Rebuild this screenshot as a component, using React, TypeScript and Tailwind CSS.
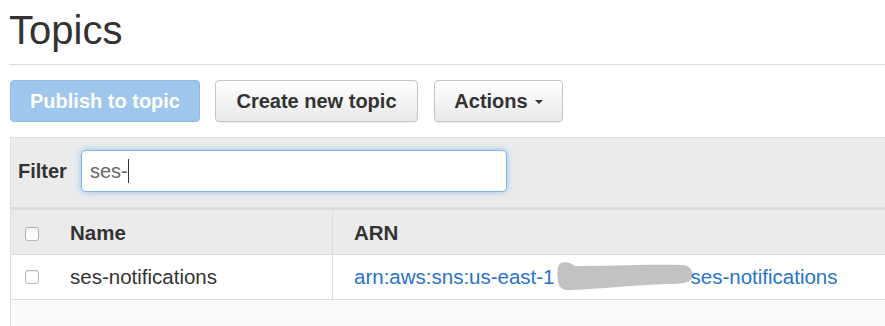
import React from "react";

const Checkbox = () => (
  <span className="inline-block w-[14px] h-[14px] rounded-[3px] border border-[#b5b5b5] bg-white shadow-[inset_0_1px_1px_rgba(0,0,0,0.08)]" />
);

// grey smudge that hides the account id in the ARN
const Redacted = () => (
  <svg width="138" height="32" viewBox="0 0 138 32" className="inline-block align-middle -mt-[1px] -mr-[2px]">
    <path
      d="M6 2 C12 0 17 3 20 5 C50 5 90 3 128 4 C136 5 138 10 137 16 C136 22 128 23 112 23 C80 24 44 28 16 29 C8 30 4 27 3 20 C2 12 2 4 6 2 Z"
      fill="#c2c2c2"
    />
  </svg>
);

export default function App() {
  return (
    <div className="w-[885px] h-[326px] overflow-hidden bg-white font-['Liberation_Sans',Arial,sans-serif] text-[#333]">
      <div className="pl-[10px]">
        <h1 className="mt-[11px] pb-[14px] text-[40px] leading-[39px] -ml-[1px] border-b border-[#dcdcdc]">
          Topics
        </h1>

        <div className="mt-[15px] flex items-center">
          <button className="w-[190px] h-[42px] rounded-[4px] bg-[#9fc6ec] border border-[#8fbbe4] text-white font-bold text-[20px]">
            Publish to topic
          </button>
          <button className="ml-[15px] w-[203px] h-[42px] rounded-[4px] bg-gradient-to-b from-white to-[#e9e9e9] border border-[#c6c6c6] shadow-[0_1px_1px_rgba(0,0,0,0.08)] text-[#333] font-bold text-[20px]">
            Create new topic
          </button>
          <button className="ml-[16px] w-[129px] h-[42px] rounded-[4px] bg-gradient-to-b from-white to-[#e9e9e9] border border-[#c6c6c6] shadow-[0_1px_1px_rgba(0,0,0,0.08)] text-[#333] font-bold text-[20px] flex items-center justify-center">
            Actions
            <span className="ml-[7px] mt-[2px] w-0 h-0 border-t-[4px] border-t-[#333] border-x-[4px] border-x-transparent" />
          </button>
        </div>

        <div className="mt-[15px] bg-[#ebebeb] border-t border-l border-[#dddddd]">
          <div className="flex items-center pl-[7px] pt-[12px] pb-[15px] border-b-[3px] border-[#dcdcdc]">
            <span className="font-bold text-[20px]">Filter</span>
            <div className="ml-[14px] w-[426px] h-[42px] rounded-[5px] bg-white border border-[#7fb8ea] shadow-[0_0_6px_rgba(102,175,233,0.7)] flex items-center pl-[8px] text-[20px] text-[#666]">
              ses-
              <span className="inline-block w-[1px] h-[24px] bg-[#333]" />
            </div>
          </div>

          <div className="flex h-[45px] border-b border-[#dcdcdc] items-center">
            <div className="w-[322px] h-full flex items-center border-r border-[#dcdcdc] pt-[3px]">
              <span className="ml-[14px] flex">
                <Checkbox />
              </span>
              <span className="ml-[31px] font-bold text-[20.5px]">Name</span>
            </div>
            <span className="ml-[21px] pt-[3px] font-bold text-[20.5px]">ARN</span>
          </div>

          <div className="flex h-[45px] bg-white border-b border-[#dcdcdc] items-center">
            <div className="w-[322px] h-full flex items-center border-r border-[#dcdcdc]">
              <span className="ml-[14px] flex">
                <Checkbox />
              </span>
              <span className="ml-[31px] text-[20.5px]">ses-notifications</span>
            </div>
            <span className="ml-[21px] text-[20.5px] text-[#2774c6] whitespace-nowrap flex items-center">
              arn:aws:sns:us-east-1
              <Redacted />
              ses-notifications
            </span>
          </div>

          <div className="h-[40px] bg-[#fafafa]" />
        </div>
      </div>
    </div>
  );
}
